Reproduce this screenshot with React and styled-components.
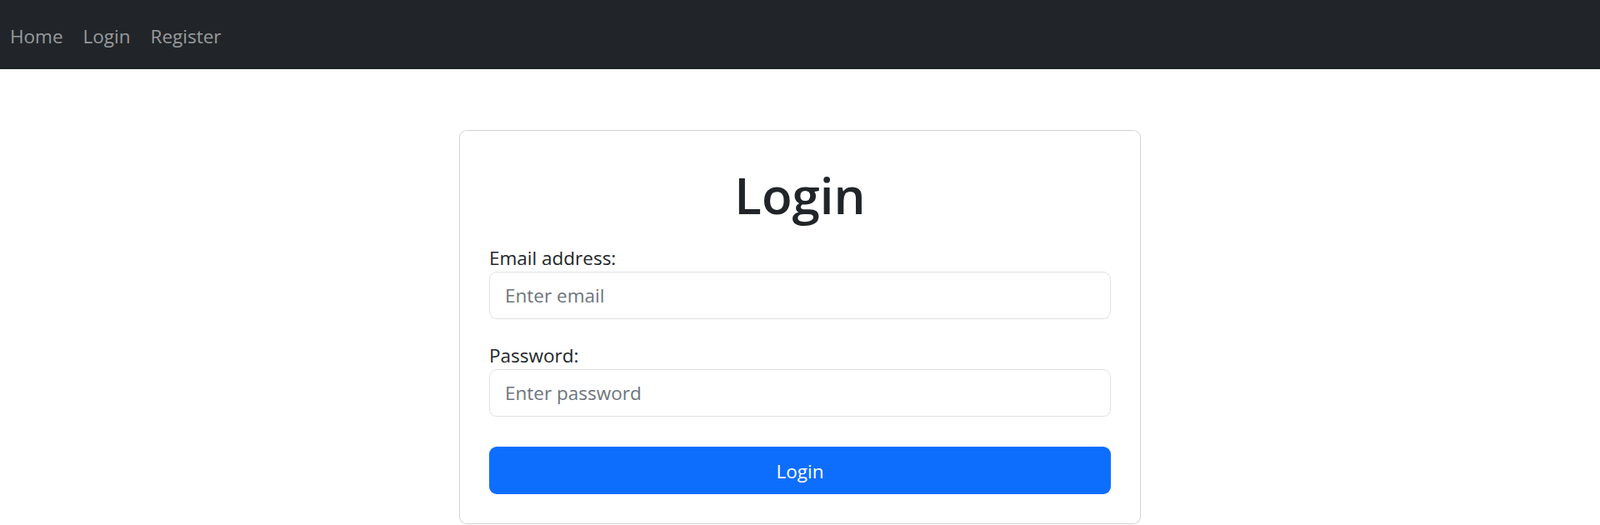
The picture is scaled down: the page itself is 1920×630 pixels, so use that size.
import React, { useState } from 'react';
import styled, { createGlobalStyle } from 'styled-components';

const GlobalStyle = createGlobalStyle`
  body {
    margin: 0;
    background: #fff;
    font-family: "Open Sans", "Noto Sans", Arial, sans-serif;
    color: #212529;
  }
  * { box-sizing: border-box; }
`;

const Navbar = styled.nav`
  height: 83px;
  background-color: #212529;
  display: flex;
  align-items: center;
  padding: 4px 0 0 12px;
  gap: 24px;
`;

const NavLink = styled.a`
  font-size: 22.5px;
  line-height: 36px;
  color: rgba(255, 255, 255, 0.55);
  text-decoration: none;
  cursor: pointer;

  &:hover {
    color: rgba(255, 255, 255, 0.75);
  }
`;

const Card = styled.div`
  width: 818px;
  margin: 73px auto 0;
  padding: 35px;
  border: 1px solid rgba(0, 0, 0, 0.175);
  border-radius: 9px;
  background: #fff;
`;

const Title = styled.h1`
  margin: 0 0 18px;
  padding-top: 4px;
  font-size: 60px;
  line-height: 76px;
  font-weight: 600;
  text-align: center;
  color: #212529;
`;

const Group = styled.div`
  margin-bottom: 24px;
`;

const Label = styled.label`
  display: block;
  padding-top: 3px;
  font-size: 22.5px;
  line-height: 33px;
  color: #212529;
`;

const Input = styled.input`
  display: block;
  width: 100%;
  height: 57px;
  padding: 9px 18px;
  font-family: inherit;
  font-size: 22.5px;
  color: #212529;
  border: 1px solid #dee2e6;
  border-radius: 9px;
  outline: none;

  &::placeholder {
    color: #6c757d;
  }
`;

const Button = styled.button`
  display: block;
  width: 100%;
  height: 57px;
  margin-top: 36px;
  padding-top: 2px;
  font-family: inherit;
  font-size: 22.5px;
  color: #fff;
  background-color: #0d6efd;
  border: none;
  border-radius: 9px;
  cursor: pointer;

  &:hover {
    background-color: #0b5ed7;
  }
`;

function App() {
  const [email, setEmail] = useState('');
  const [password, setPassword] = useState('');

  const handleSubmit = (e) => {
    e.preventDefault();
  };

  return (
    <>
      <GlobalStyle />
      <Navbar>
        <NavLink href="#">Home</NavLink>
        <NavLink href="#">Login</NavLink>
        <NavLink href="#">Register</NavLink>
      </Navbar>
      <Card>
        <Title>Login</Title>
        <form onSubmit={handleSubmit}>
          <Group>
            <Label htmlFor="email">Email address:</Label>
            <Input
              id="email"
              type="email"
              placeholder="Enter email"
              value={email}
              onChange={(e) => setEmail(e.target.value)}
            />
          </Group>
          <Label htmlFor="password">Password:</Label>
          <Input
            id="password"
            type="password"
            placeholder="Enter password"
            value={password}
            onChange={(e) => setPassword(e.target.value)}
          />
          <Button type="submit">Login</Button>
        </form>
      </Card>
    </>
  );
}

export default App;
